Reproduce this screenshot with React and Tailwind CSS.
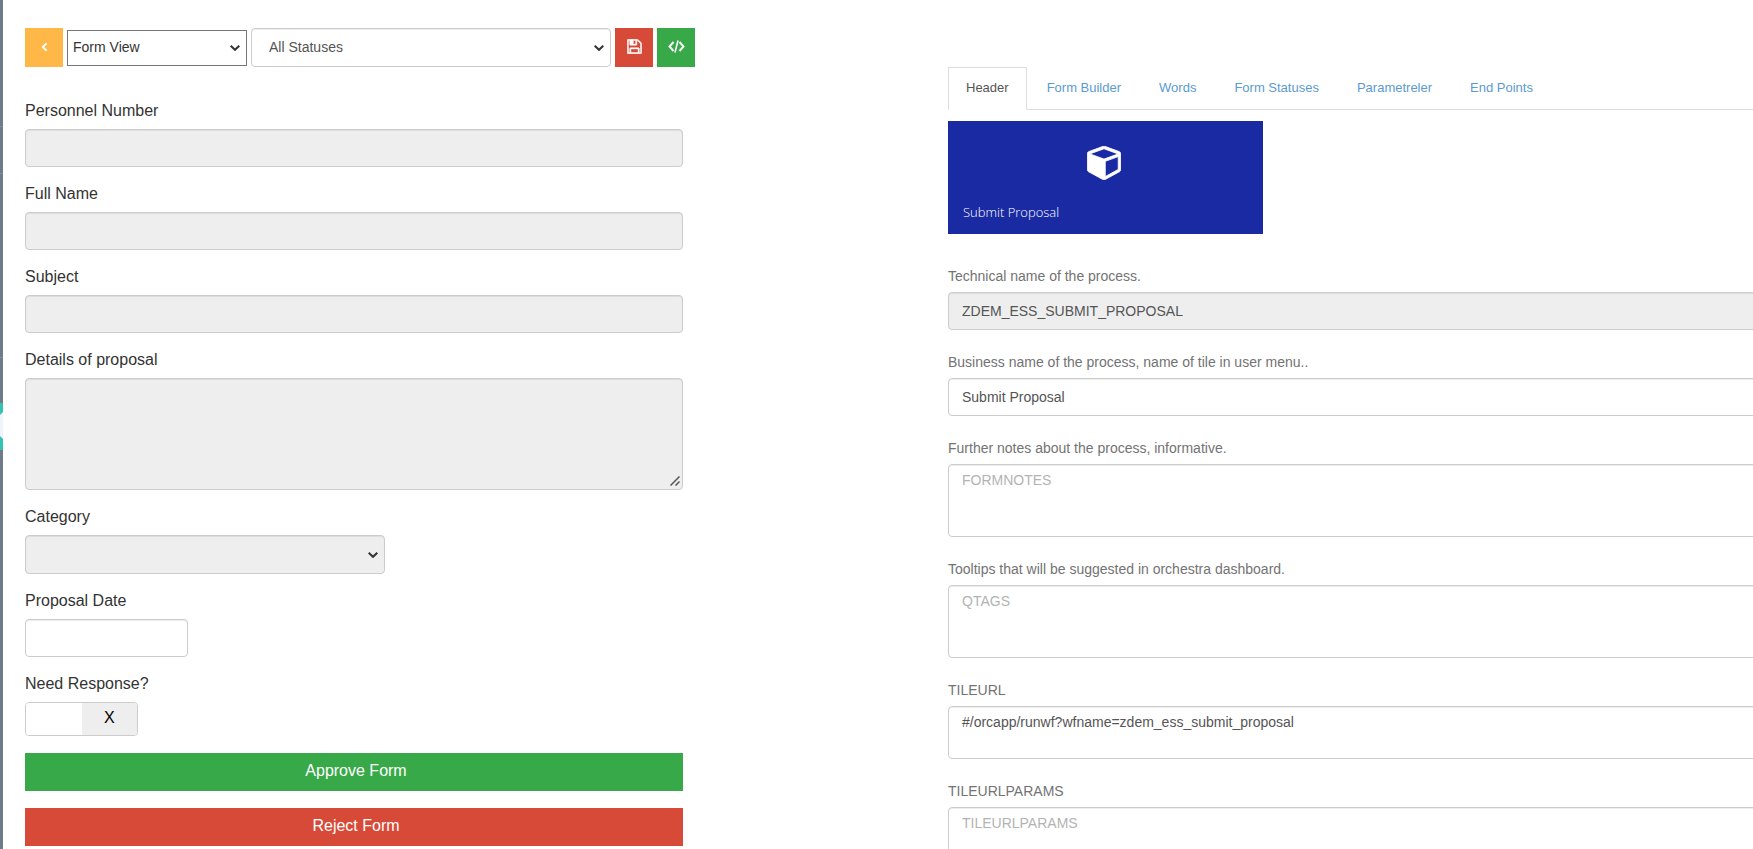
import React from "react";

const control =
  "block w-full rounded border border-[#ccc] px-[13px] text-sm text-[#555] placeholder-[#b3b3b3] shadow-[inset_0_1px_1px_rgba(0,0,0,0.075)] outline-none";

const toolButton = "flex h-[39px] w-[38px] items-center justify-center pb-[2px] text-white";

function FormField({ id, label, children }) {
  return (
    <div className="mb-[15px]">
      <label htmlFor={id} className="mb-[6px] block w-fit text-base leading-6 text-[#333]">
        {label}
      </label>
      {children}
    </div>
  );
}

function SettingField({ id, label, children }) {
  return (
    <div className="mb-[22px]">
      <label htmlFor={id} className="mb-[6px] block w-fit text-sm leading-5 text-[#737373]">
        {label}
      </label>
      {children}
    </div>
  );
}

/* A select with its own arrow, laid over the right edge of the control. */
function Select({ className, children, ...props }) {
  return (
    <div className="relative w-fit text-[#333]">
      <select {...props} className={`block appearance-none pb-[2px] text-sm outline-none ${className}`}>
        {children}
      </select>
      <svg
        viewBox="0 0 10 7"
        className="pointer-events-none absolute top-1/2 right-[7px] h-[7px] w-[10px] -translate-y-1/2"
        fill="none"
        stroke="currentColor"
        strokeWidth="2"
      >
        <path d="M0.700 1.200 L5 5.300 L9.300 1.200" />
      </svg>
    </div>
  );
}

function ChevronIcon() {
  return (
    <svg viewBox="0 0 8 12" className="h-[10px] w-[7px]" fill="none" stroke="currentColor" strokeWidth="2.200">
      <path d="M6.500 1.500 L2 6 L6.500 10.500" />
    </svg>
  );
}

function SaveIcon() {
  return (
    <svg viewBox="-30 -30 1596 1596" className="h-[15px] w-[15px]" fill="currentColor" stroke="currentColor" strokeWidth="50">
      <path d="M384 1408h768v-384H384zM1280 1408h128V512q0-14-10-38.500t-20-34.500l-281-281q-10-10-34-20t-39-10v416q0 40-28 68t-68 28H352q-40 0-68-28t-28-68V128H128v1280h128V992q0-40 28-68t68-28h832q40 0 68 28t28 68zM896 480V160q0-13-9.500-22.500T864 128H672q-13 0-22.500 9.500T640 160v320q0 13 9.500 22.500T672 512h192q13 0 22.500-9.500T896 480zM1536 512v928q0 40-28 68t-68 28H96q-40 0-68-28t-28-68V96q0-40 28-68T96 0h928q40 0 88 20t76 48l280 280q28 28 48 76t20 88z" />
    </svg>
  );
}

function CodeIcon() {
  return (
    <svg viewBox="0 0 17 13" className="h-[13px] w-[17px]" fill="none" stroke="currentColor" strokeWidth="1.900">
      <path d="M5.500 2 L1.500 6.500 L5.500 11 M11.500 2 L15.500 6.500 L11.500 11" />
      <path d="M10 0.500 L7 12.500" strokeWidth="1.600" />
    </svg>
  );
}

function CubeIcon() {
  return (
    <svg
      viewBox="-10 118 1684 1684"
      className="h-[34px] w-[34px]"
      fill="currentColor"
      fillRule="evenodd"
      stroke="currentColor"
      strokeWidth="40"
    >
      <path d="M896 1629l640-349v-636l-640 233v752zM832 764l698-254-698-254-698 254zM1664 512v768q0 35-18 65t-49 47l-704 384q-28 16-61 16t-61-16l-704-384q-31-17-49-47t-18-65v-768q0-40 23-73t61-47l704-256q22-8 44-8t44 8l704 256q38 14 61 47t23 73z" />
    </svg>
  );
}

const tabs = ["Form Builder", "Words", "Form Statuses", "Parametreler", "End Points"];

export default function App() {
  return (
    <div className="flex h-screen overflow-hidden bg-white font-['Liberation_Sans',Arial,sans-serif]">
      <aside className="flex w-[3px] shrink-0 flex-col bg-[#6f7b88]">
        <div className="h-[127px] border-b border-[#808b9b]" />
        <div className="h-[47px] border-b border-[#808b9b]" />
        <div className="h-[184px] border-b border-[#808b9b]" />
        <svg viewBox="0 0 3 47" className="mt-[45px] h-[47px] w-[3px]">
          <rect width="3" height="47" fill="#34c3b2" />
          <path d="M0 12 L3 9 V36 L0 33 Z" fill="#eff3fb" />
        </svg>
      </aside>

      <main className="grid min-w-0 flex-1 grid-cols-[923fr_805fr] pl-[22px]">
        <section className="pt-7">
          <div className="mb-8 flex items-center gap-1">
            <button type="button" aria-label="Back" className={`${toolButton} bg-[#ffb848]`}>
              <ChevronIcon />
            </button>
            <Select aria-label="View" className="h-9 w-[180px] border border-[#767676] bg-white pl-[5px] text-[#333]">
              <option>Form View</option>
            </Select>
            <Select
              aria-label="Status"
              className="h-[39px] w-[360px] rounded border border-[#ccc] bg-white pl-[17px] text-[#555] shadow-[inset_0_1px_1px_rgba(0,0,0,0.075)]"
            >
              <option>All Statuses</option>
            </Select>
            <button type="button" aria-label="Save" className={`${toolButton} bg-[#d84a38]`}>
              <SaveIcon />
            </button>
            <button type="button" aria-label="Source" className={`${toolButton} bg-[#38a948]`}>
              <CodeIcon />
            </button>
          </div>

          <form className="max-w-[658px]">
            <FormField id="personnel" label="Personnel Number">
              <input id="personnel" readOnly className={`${control} h-[38px] bg-[#eee]`} />
            </FormField>
            <FormField id="fullname" label="Full Name">
              <input id="fullname" readOnly className={`${control} h-[38px] bg-[#eee]`} />
            </FormField>
            <FormField id="subject" label="Subject">
              <input id="subject" readOnly className={`${control} h-[38px] bg-[#eee]`} />
            </FormField>
            <FormField id="details" label="Details of proposal">
              <div className="relative">
                <textarea id="details" readOnly className={`${control} h-28 resize-none bg-[#eee]`} />
                <svg
                  viewBox="0 0 10 10"
                  className="pointer-events-none absolute right-[3px] bottom-1 h-[10px] w-[10px]"
                  fill="none"
                  stroke="#555"
                  strokeWidth="1.500"
                >
                  <path d="M0.500 9.500 L9.500 0.500 M5.500 9.500 L9.500 5.500" />
                </svg>
              </div>
            </FormField>
            <FormField id="category" label="Category">
              <Select
                id="category"
                className="h-[39px] w-[360px] rounded border border-[#ccc] bg-[#eee] pl-[17px] text-[#555] shadow-[inset_0_1px_1px_rgba(0,0,0,0.075)]"
              >
                <option></option>
              </Select>
            </FormField>
            <FormField id="date" label="Proposal Date">
              <input id="date" className={`${control} h-[38px] max-w-[163px] bg-white`} />
            </FormField>
            <FormField id="response" label="Need Response?">
              <label className="flex h-[34px] w-[113px] overflow-hidden rounded border border-[#ccc]">
                <input id="response" type="checkbox" className="sr-only" />
                <span className="flex-1 bg-white" />
                <span className="flex flex-1 items-center justify-center bg-[#eee] pb-[2px] text-base text-black">X</span>
              </label>
            </FormField>
            <div className="flex flex-col gap-[17px] pt-[2px]">
              <button type="button" className="h-[38px] bg-[#38a948] pb-[3px] pl-1 text-base text-white">
                Approve Form
              </button>
              <button type="button" className="h-[38px] bg-[#d84a38] pb-[3px] pl-1 text-base text-white">
                Reject Form
              </button>
            </div>
          </form>
        </section>

        <section className="-mr-5 pt-[67px]">
          <nav className="flex gap-[2px] border-b border-[#ddd] text-[13px] leading-5">
            <a href="#header" className="-mb-px border border-[#ddd] border-b-white bg-white px-[17px] pt-[10px] pb-[11px] text-[#555]">
              Header
            </a>
            {tabs.map((tab) => (
              <a key={tab} href="#tab" className="px-[18px] pt-[11px] pb-[11px] text-[#5b9bd1]">
                {tab}
              </a>
            ))}
          </nav>

          <div className="mt-[11px] mb-8 flex h-[113px] w-[315px] flex-col bg-[#1a2aa3] text-white">
            <div className="flex justify-center pt-[25px] pr-[3px]">
              <CubeIcon />
            </div>
            <span className="mt-[22px] pl-[15px] font-['Open_Sans',sans-serif] text-[13px] leading-5 font-light">Submit Proposal</span>
          </div>

          <SettingField id="techname" label="Technical name of the process.">
            <input id="techname" readOnly defaultValue="ZDEM_ESS_SUBMIT_PROPOSAL" className={`${control} h-[38px] bg-[#eee]`} />
          </SettingField>
          <SettingField id="bizname" label="Business name of the process, name of tile in user menu..">
            <input id="bizname" defaultValue="Submit Proposal" className={`${control} h-[38px] bg-white`} />
          </SettingField>
          <SettingField id="notes" label="Further notes about the process, informative.">
            <textarea id="notes" placeholder="FORMNOTES" className={`${control} h-[73px] bg-white py-[5px]`} />
          </SettingField>
          <SettingField id="qtags" label="Tooltips that will be suggested in orchestra dashboard.">
            <textarea id="qtags" placeholder="QTAGS" className={`${control} h-[73px] bg-white py-[5px]`} />
          </SettingField>
          <SettingField id="tileurl" label="TILEURL">
            <textarea
              id="tileurl"
              defaultValue="#/orcapp/runwf?wfname=zdem_ess_submit_proposal"
              className={`${control} h-[53px] bg-white py-[5px]`}
            />
          </SettingField>
          <SettingField id="tileurlparams" label="TILEURLPARAMS">
            <textarea id="tileurlparams" placeholder="TILEURLPARAMS" className={`${control} h-[53px] bg-white py-[5px]`} />
          </SettingField>
        </section>
      </main>
    </div>
  );
}
